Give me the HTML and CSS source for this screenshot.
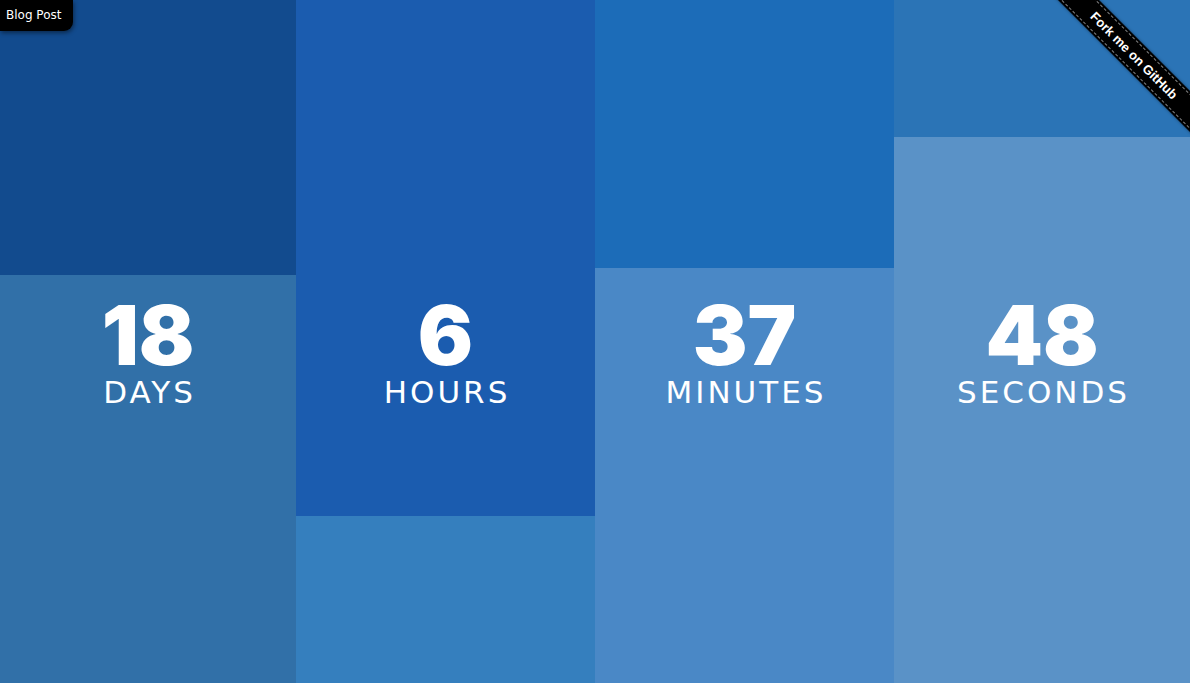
FILE: index.html
```html
<!DOCTYPE html>
<html>
<head>
<meta charset="utf-8">
<link rel="stylesheet" href="styles.css">
</head>
<body>
<main class="board">
  <section class="col col-days">
    <div class="fill"><div class="top" style="height:275px"></div><div class="bottom"></div></div>
    <div class="readout"><div class="num">18</div><div class="unit">DAYS</div></div>
  </section>
  <section class="col col-hours">
    <div class="fill"><div class="top" style="height:516px"></div><div class="bottom"></div></div>
    <div class="readout"><div class="num">6</div><div class="unit">HOURS</div></div>
  </section>
  <section class="col col-minutes">
    <div class="fill"><div class="top" style="height:268px"></div><div class="bottom"></div></div>
    <div class="readout"><div class="num">37</div><div class="unit">MINUTES</div></div>
  </section>
  <section class="col col-seconds">
    <div class="fill"><div class="top" style="height:137px"></div><div class="bottom"></div></div>
    <div class="readout"><div class="num">48</div><div class="unit">SECONDS</div></div>
  </section>
</main>
<a class="blog" href="#">Blog Post</a>
<div class="ribbon-wrap"><a class="ribbon" href="#"><span>Fork me on GitHub</span></a></div>
</body>
</html>
```
FILE: styles.css
```css
html, body {
  margin: 0;
  padding: 0;
  height: 683px;
  overflow: hidden;
}
body {
  font-family: "Inter", "Noto Sans", sans-serif;
  position: relative;
}
.board {
  display: grid;
  grid-template-columns: 296px 299px 299px 296px;
  height: 683px;
}
.col {
  display: grid;
}
.fill, .readout {
  grid-area: 1 / 1;
}
.fill {
  display: flex;
  flex-direction: column;
}
.bottom { flex: 1; }
.col-days .top { background: #124b8e; }
.col-days .bottom { background: #3170a8; }
.col-hours .top { background: #1b5caf; }
.col-hours .bottom { background: #357fbe; }
.col-minutes .top { background: #1c6cb8; }
.col-minutes .bottom { background: #4a88c6; }
.col-seconds .top { background: #2b74b6; }
.col-seconds .bottom { background: #5a92c7; }

.readout {
  align-self: start;
  margin-top: 297px;
  color: #fff;
  text-align: center;
}
.num {
  font-family: "Inter", sans-serif;
  font-weight: 900;
  font-size: 82px;
  line-height: 77px;
}
.unit {
  font-family: "DejaVu Sans", sans-serif;
  font-weight: 400;
  font-size: 31px;
  line-height: 36px;
  letter-spacing: 3px;
  padding-left: 3px;
}

.blog {
  position: absolute;
  top: 0;
  left: 0;
  width: 73px;
  height: 31px;
  box-sizing: border-box;
  padding-top: 8px;
  padding-left: 6px;
  background: #000;
  color: #fff;
  font-family: "DejaVu Sans", sans-serif;
  font-size: 12px;
  line-height: 15px;
  text-decoration: none;
  border-bottom-right-radius: 9px;
  box-shadow: 1px 2px 4px rgba(0,0,0,.45);
}

.ribbon-wrap {
  position: absolute;
  top: 0;
  right: 0;
  width: 150px;
  height: 150px;
  overflow: hidden;
}
.ribbon {
  position: absolute;
  left: -16px;
  top: 41px;
  width: 220px;
  height: 29px;
  box-sizing: border-box;
  padding: 2px 0;
  background: #000;
  transform: rotate(45deg);
  text-decoration: none;
  box-shadow: 0 0 3px rgba(0,0,0,.5);
}
.ribbon span {
  display: block;
  height: 25px;
  box-sizing: border-box;
  border-top: 1px dashed rgba(255,255,255,.5);
  border-bottom: 1px dashed rgba(255,255,255,.5);
  color: #fff;
  font-family: "Liberation Sans", Arial, sans-serif;
  font-weight: 700;
  font-size: 13px;
  line-height: 23px;
  text-align: center;
}
```
